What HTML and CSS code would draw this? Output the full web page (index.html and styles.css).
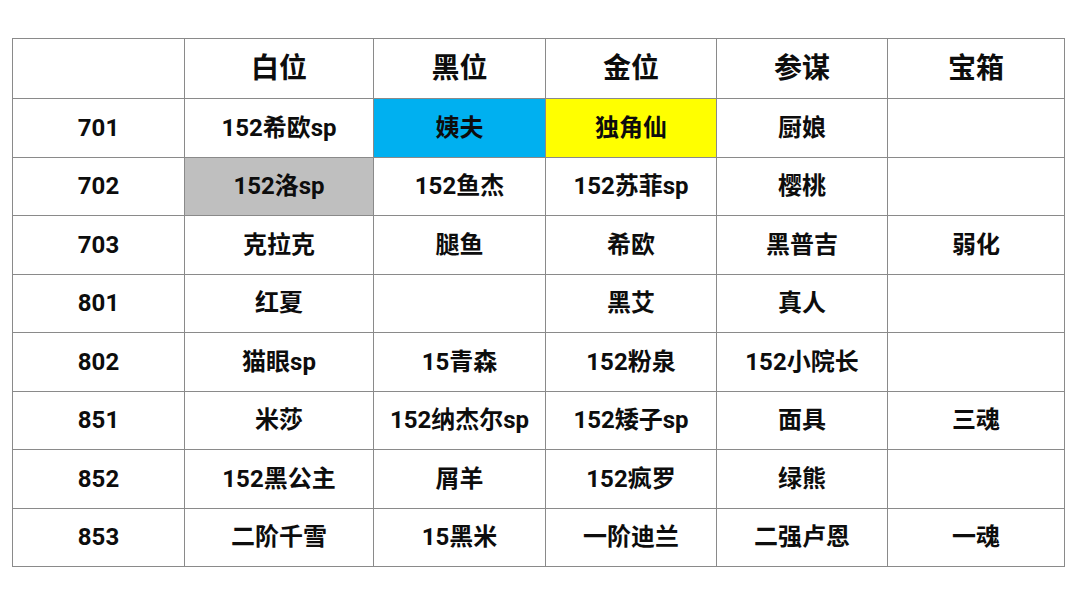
FILE: index.html
```html
<!DOCTYPE html>
<html lang="zh">
<head>
<meta charset="utf-8">
<link rel="stylesheet" href="styles.css">
</head>
<body>
<table class="grid">
  <colgroup>
    <col class="c0"><col class="c1"><col class="c2"><col class="c3"><col class="c4"><col class="c5">
  </colgroup>
  <thead>
    <tr class="head"><th></th><th>白位</th><th>黑位</th><th>金位</th><th>参谋</th><th>宝箱</th></tr>
  </thead>
  <tbody>
    <tr><td>701</td><td>152希欧sp</td><td class="blue">姨夫</td><td class="yellow">独角仙</td><td>厨娘</td><td></td></tr>
    <tr><td>702</td><td class="gray">152洛sp</td><td>152鱼杰</td><td>152苏菲sp</td><td>樱桃</td><td></td></tr>
    <tr><td>703</td><td>克拉克</td><td>腿鱼</td><td>希欧</td><td>黑普吉</td><td>弱化</td></tr>
    <tr><td>801</td><td>红夏</td><td></td><td>黑艾</td><td>真人</td><td></td></tr>
    <tr><td>802</td><td>猫眼sp</td><td>15青森</td><td>152粉泉</td><td>152小院长</td><td></td></tr>
    <tr><td>851</td><td>米莎</td><td>152纳杰尔sp</td><td>152矮子sp</td><td>面具</td><td>三魂</td></tr>
    <tr><td>852</td><td>152黑公主</td><td>屑羊</td><td>152疯罗</td><td>绿熊</td><td></td></tr>
    <tr><td>853</td><td>二阶千雪</td><td>15黑米</td><td>一阶迪兰</td><td>二强卢恩</td><td>一魂</td></tr>
  </tbody>
</table>
</body>
</html>
```
FILE: styles.css
```css
html, body {
  margin: 0;
  padding: 0;
  background: #ffffff;
}
body {
  padding: 38px 0 0 12px;
  font-family: Roboto, "Noto Sans CJK SC", sans-serif;
  color: #0d0d0d;
}
.grid {
  border-collapse: collapse;
  table-layout: fixed;
  width: 1052px;
}
.c0 { width: 172px; }
.c1 { width: 189px; }
.c2 { width: 172px; }
.c3 { width: 171px; }
.c4 { width: 171px; }
.c5 { width: 177px; }
.grid th, .grid td {
  border: 1.5px solid #8a8a8a;
  text-align: center;
  vertical-align: middle;
  padding: 0;
  font-weight: 700;
  white-space: nowrap;
}
.grid th {
  font-size: 28px;
  line-height: 32px;
  height: 58px;
  padding-top: 1px;
}
.grid td {
  font-size: 24px;
  line-height: 28px;
  height: 57.5px;
}
.blue { background: #00b0f0; }
.yellow { background: #ffff00; }
.gray { background: #bfbfbf; }
```
